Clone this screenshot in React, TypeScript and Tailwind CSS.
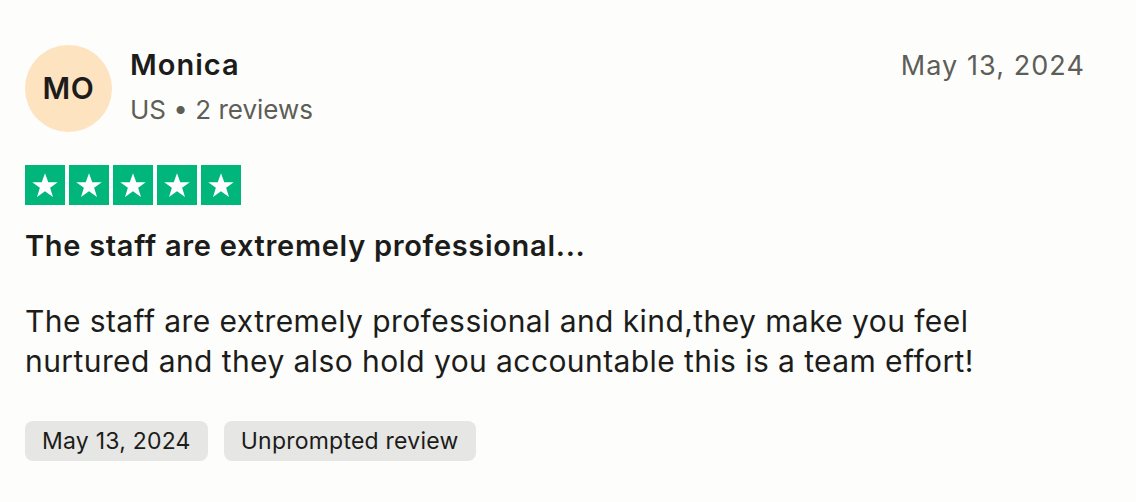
import React from 'react';

const Star: React.FC = () => (
    <div className="w-[40px] h-[40px] bg-[#00b67a] flex items-center justify-center">
        <svg viewBox="0 0 24 24" className="w-[30px] h-[30px]" fill="#ffffff">
            <path d="M12 2.5l2.6 7.2h7.6l-6.1 4.5 2.3 7.3L12 17l-6.4 4.5 2.3-7.3-6.1-4.5h7.6z" />
        </svg>
    </div>
);

const App: React.FC = () => {
    return (
        <div
            className="w-[1136px] h-[502px] bg-[#fdfdfc] text-[#1c1c1a] px-[25px] pt-[45px]"
            style={{ fontFamily: 'Inter, "Noto Sans", sans-serif' }}
        >
            <div className="flex items-start justify-between">
                <div className="flex items-start gap-[18px]">
                    <div className="w-[87px] h-[87px] rounded-full bg-[#fee3c1] flex items-center justify-center text-[30px] font-semibold tracking-[0.02em] text-[#1c1c1a]">
                        MO
                    </div>
                    <div className="flex flex-col">
                        <span className="text-[29px] font-semibold leading-[40px] tracking-[0.035em]">Monica</span>
                        <span className="mt-[5px] text-[26px] leading-[40px] text-[#5e5e58]">US • 2 reviews</span>
                    </div>
                </div>
                <span className="mt-[1px] text-[27px] leading-[40px] text-[#5e5e58] mr-[26px] tracking-[0.04em]">May 13, 2024</span>
            </div>

            <div className="flex gap-[4px] mt-[33px]">
                <Star />
                <Star />
                <Star />
                <Star />
                <Star />
            </div>

            <h2 className="mt-[21px] text-[29px] font-semibold leading-[40px] tracking-[0.024em]">
                The staff are extremely professional...
            </h2>

            <p className="mt-[35px] text-[30px] leading-[40px] tracking-[0.014em] w-[1000px]">
                The staff are extremely professional and kind,they make you feel nurtured and they also hold you accountable this is a team effort!
            </p>

            <div className="flex gap-[16px] mt-[40px]">
                <span className="h-[40px] px-[17px] rounded-[8px] bg-[#e6e6e4] text-[23px] flex items-center tracking-[0.01em]">
                    May 13, 2024
                </span>
                <span className="h-[40px] px-[17px] rounded-[8px] bg-[#e6e6e4] text-[23px] flex items-center tracking-[0.01em]">
                    Unprompted review
                </span>
            </div>
        </div>
    );
};

export default App;
